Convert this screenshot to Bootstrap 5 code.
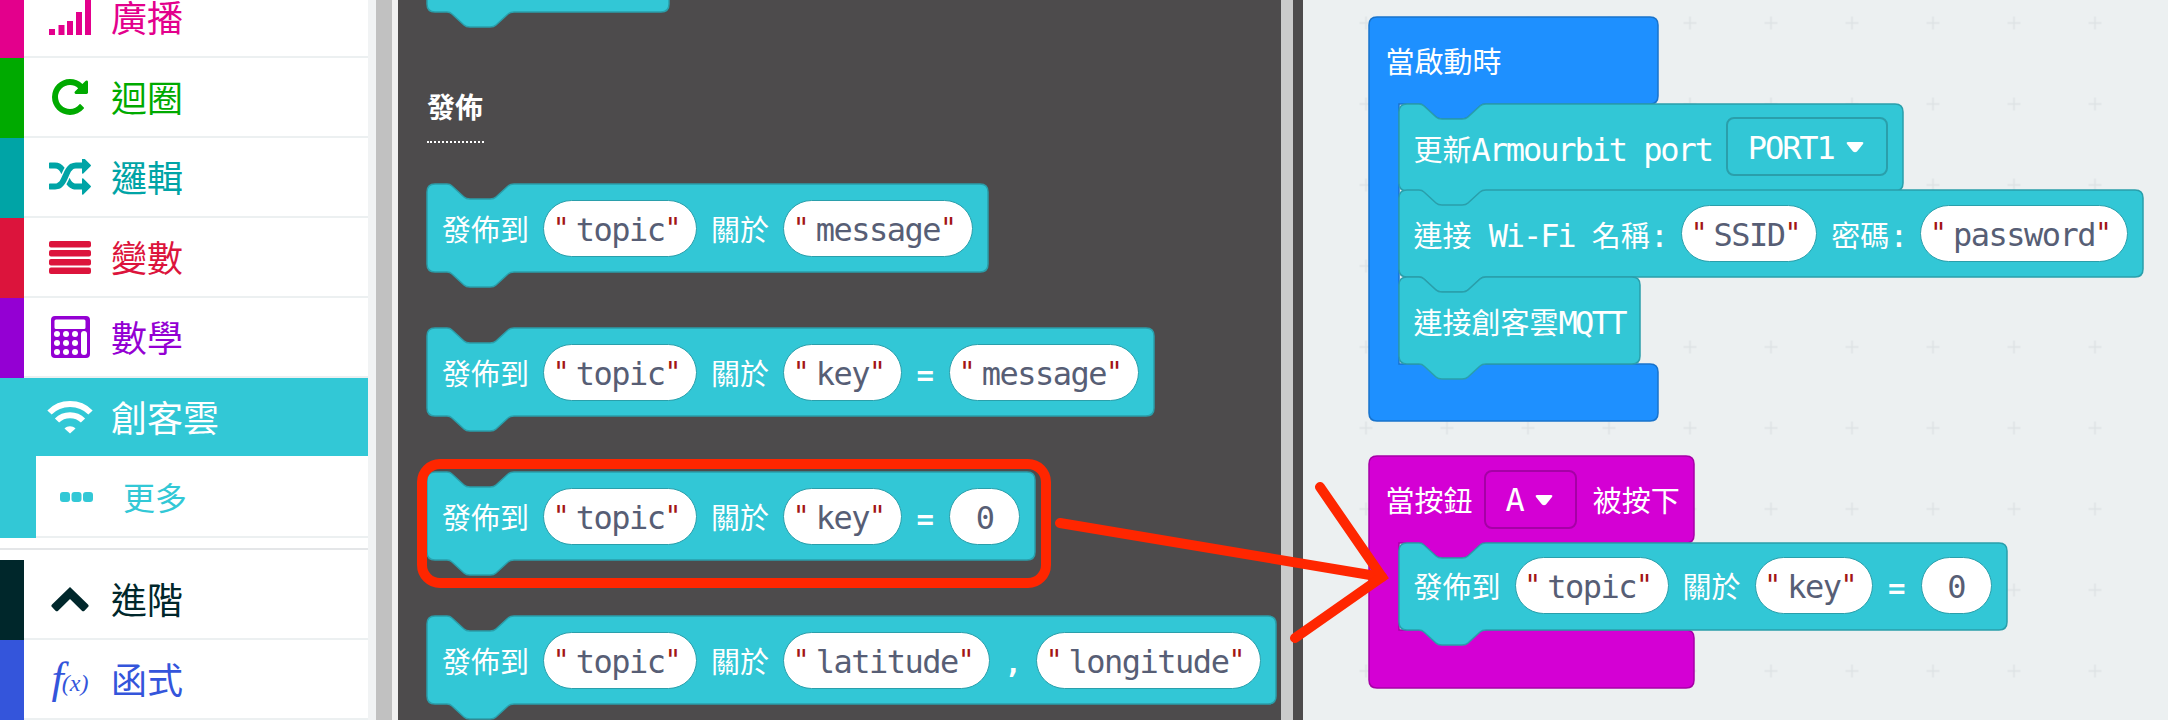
<!DOCTYPE html>
<html lang="zh-Hant">
<head>
  <meta charset="UTF-8" />
  <meta name="viewport" content="width=device-width, initial-scale=1.0"/>
  <title>MakeCode 創客雲</title>
  <link href="https://cdn.jsdelivr.net/npm/bootstrap@5.3.3/dist/css/bootstrap.min.css" rel="stylesheet">
  <style>
    html, body { height: 720px; overflow: hidden; }
    body { background: #fff; }
    .editor { width: 2168px; height: 720px; position: relative; overflow: hidden; }

    /* toolbox */
    .toolbox { width: 376px; flex: none; background: #fff; border-right: 8px solid #f1f3f4; overflow: hidden; font-family: "Noto Sans CJK TC", sans-serif; }
    .cat-list { margin-top: -22px; }
    .cat-row { height: 80px; display: flex; align-items: center; border-bottom: 2px solid #ecf0f1; font-size: 36px; line-height: 1; }
    .cat-row > span { margin-left: -1px; margin-top: -3px; }
    .cat-strip { width: 24px; height: 80px; flex: none; margin-bottom: -2px; background: currentColor; }
    .cat-icon { width: 88px; flex: none; display: flex; justify-content: center; padding-left: 4px; }
    .cat-active { background: #32c8d6; color: #fff !important; height: 78px; border-bottom: 0; }
    .cat-active .cat-strip { height: 78px; margin: 0; background: #32c8d6; }
    .cat-sub { height: 82px; border-top: 2px solid #fff; color: #32c8d6; font-size: 32px; }
    .cat-sub .cat-strip { width: 36px; height: 82px; margin-top: -2px; }
    .cat-sub .cat-icon { width: 88px; justify-content: flex-start; padding-left: 24px; }
    .cat-gap { height: 10px; border-bottom: 0; }
    .cat-rule { height: 12px; border-top: 2px solid #e4e6e8; }
    .fx-f { font: italic 44px/1 "Liberation Serif", serif; margin-right: -2px; }
    .fx-x { font: italic 24px/1 "Liberation Serif", serif; margin-top: 14px; }
    .c-pink { color: #e3008c; } .c-green { color: #00aa00; } .c-logic { color: #00a4a6; }
    .c-var { color: #dc143c; } .c-math { color: #9400d3; } .c-adv { color: #00272b; } .c-fn { color: #3455db; }

    .scroll-bar { width: 16px; flex: none; background: #c1c1c1; }
    .scroll-edge { width: 6px; flex: none; background: #f1f1f1; }

    /* flyout */
    .flyout { width: 883px; flex: none; background: #4d4b4c; padding-left: 29px; overflow: hidden; }
    .flyout-top { margin-top: -76px; }
    .fly-head { width: 57px; margin: 76px 0 41px; padding-bottom: 17px; border-bottom: 2px dotted #fff; color: #fff; font: 700 28px/36px "Noto Sans CJK TC", sans-serif; white-space: nowrap; }
    .mk-gap { margin-bottom: 56px; }
    .splitter { width: 12px; flex: none; background: #cbcbcb; }
    .gutter { width: 10px; flex: none; background: #4d4b4c; }

    /* blocks */
    .mk-block { position: relative; z-index: 0; width: max-content; min-height: 88px; display: flex; align-items: center; padding: 0 15px; gap: 14px; color: #fff; font: 29px/1 "DejaVu Sans Mono", "Noto Sans CJK TC", monospace; white-space: nowrap; }
    .mk-block > span, .mk-block > div { position: relative; }
    .mk-block > span { padding-top: 6px; }
    .mk-shape { position: absolute; left: 0; top: 0; overflow: visible; }
    .mk-teal > .mk-shape path { fill: #32c7d6; stroke: #2a9fab; stroke-width: 1.5; }
    .mk-stub { width: 242px; }
    .mk-in { min-height: 86.500px; }
    /* latin text is drawn larger and squeezed to the cell width of the original mono font */
    .mk-lat { font-size: 32px; letter-spacing: -2.100px; }
    .mk-tight { letter-spacing: -2.700px; }
    .mk-op { font-weight: 700; margin: 0 1px; }
    .mk-comma { margin: 0; }
    .mk-pill { height: 57px; padding: 3px 14.750px 0; display: flex; align-items: center; background: #fff; border: 1.500px solid #2a9fab; border-radius: 29px; color: #575e75; font-size: 32px; letter-spacing: -1.500px; }
    .mk-pill i { font-style: normal; color: #a31515; font-size: 28px; letter-spacing: 0; margin-top: -2px; }
    .mk-pill i:first-child { margin-left: -6px; margin-right: 6px; }
    .mk-num { width: 71px; justify-content: center; }
    .mk-drop { height: 59px; padding: 2px 22px 0 20px; display: flex; align-items: center; gap: 12px; border: 2px solid #2a9fab; border-radius: 8px; }
    .mk-c > .mk-chead .mk-drop { border-color: #a600a6; margin: 0 2px 0 -3px; }

    /* c blocks on the canvas */
    .workspace { flex: 1; position: relative; background: #ecf0f1; overflow: hidden; }
    .grid-dots { position: absolute; left: 0; top: 0; width: 100%; height: 100%; }
    .mk-c { position: absolute; color: #fff; font: 29px/1 "DejaVu Sans Mono", "Noto Sans CJK TC", monospace; white-space: nowrap; }
    .mk-c > .mk-shape path { stroke-width: 1.500; }
    .mk-blue > .mk-shape path { fill: #1e90ff; stroke: #1873cc; }
    .mk-pu > .mk-shape path { fill: #d400d4; stroke: #a600a6; }
    .mk-blue { left: 65.500px; top: 17px; width: 289px; }
    .mk-pu { left: 65.500px; top: 456px; width: 325px; }
    .mk-chead { position: relative; height: 86.500px; display: flex; align-items: center; gap: 14px; padding: 0 17px; }
    .mk-chead > span { padding-top: 6px; }
    .mk-cbody { margin-left: 30px; position: relative; }
    .mk-cfoot { height: 58px; }
    .mk-pu .mk-cfoot { height: 59px; }

    .mark-up { position: absolute; left: 0; top: 0; pointer-events: none; }
  </style>
</head>
<body>
  <div class="editor d-flex">

    <!-- toolbox -->
    <div class="toolbox">
      <div class="cat-list">
        <div class="cat-row c-pink"><div class="cat-strip"></div>
          <div class="cat-icon"><svg width="42" height="35" viewBox="0 0 42 35" fill="currentColor"><rect x="0" y="29" width="6" height="6"/><rect x="9.500" y="25" width="6" height="10"/><rect x="18" y="21" width="6" height="14"/><rect x="27" y="12" width="6" height="23"/><rect x="36" y="0" width="6" height="35"/></svg></div>
          <span>廣播</span></div>
        <div class="cat-row c-green"><div class="cat-strip"></div>
          <div class="cat-icon"><svg width="36" height="36" viewBox="128 128 1536 1536" fill="currentColor"><path d="M1664 256v448q0 26-19 45t-45 19h-448q-42 0-59-40-17-39 14-69l138-138q-148-137-349-137-104 0-198.5 40.5t-163.5 109.5-109.5 163.5-40.5 198.5 40.5 198.5 109.5 163.5 163.5 109.5 198.5 40.5q119 0 225-52t179-147q7-10 23-12 15 0 25 9l137 138q9 8 9.5 20.5t-7.5 22.5q-109 132-264 204.5t-327 72.5q-156 0-298-61t-245-164-164-245-61-298 61-298 164-245 245-164 298-61q147 0 284.5 55.5t244.5 156.5l130-129q29-31 70-14 39 17 39 59z"/></svg></div>
          <span>迴圈</span></div>
        <div class="cat-row c-logic"><div class="cat-strip"></div>
          <div class="cat-icon"><svg width="42" height="37" viewBox="0 128 1792 1536" fill="currentColor"><path d="M666 481q-60 92-137 273-22-45-37-72.5t-40.5-63.5-51-56.5-63-35-81.5-14.5h-224q-14 0-23-9t-9-23v-192q0-14 9-23t23-9h224q250 0 410 225zm1126 799q0 14-9 23l-320 320q-9 9-23 9-13 0-22.5-9.5t-9.5-22.5v-192q-32 0-85 .5t-81 1-73-1-71-5-64-10.5-63-18.5-58-28.5-59-40-55-53.5-56-69.5q59-93 136-273 22 45 37 72.5t40.5 63.5 51 56.5 63 35 81.5 14.5h256v-192q0-14 9-23t23-9q12 0 24 10l319 319q9 9 9 23zm0-896q0 14-9 23l-320 320q-9 9-23 9-13 0-22.5-9.5t-9.5-22.5v-192h-256q-48 0-87 15t-69 45-51 61.5-45 77.5q-32 62-78 171-29 66-49.5 111t-54 105-64 100-74 83-90 68.5-106.5 42-128 16.5h-224q-14 0-23-9t-9-23v-192q0-14 9-23t23-9h224q48 0 87-15t69-45 51-61.5 45-77.5q32-62 78-171 29-66 49.5-111t54-105 64-100 74-83 90-68.5 106.5-42 128-16.5h256v-192q0-14 9-23t23-9q12 0 24 10l319 319q9 9 9 23z"/></svg></div>
          <span>邏輯</span></div>
        <div class="cat-row c-var"><div class="cat-strip"></div>
          <div class="cat-icon"><svg width="42" height="33" viewBox="0 0 42 33" fill="currentColor"><rect width="42" height="6.500" rx="2"/><rect y="9" width="42" height="6.500" rx="2"/><rect y="18" width="42" height="6.500" rx="2"/><rect y="26.500" width="42" height="6.500" rx="2"/></svg></div>
          <span>變數</span></div>
        <div class="cat-row c-math"><div class="cat-strip"></div>
          <div class="cat-icon"><svg width="39" height="42" viewBox="0 0 39 42" fill="currentColor"><path fill-rule="evenodd" d="M4 0h31a4 4 0 0 1 4 4v34a4 4 0 0 1-4 4H4a4 4 0 0 1-4-4V4a4 4 0 0 1 4-4zM5 3.500a1.500 1.500 0 0 0-1.500 1.500v6.500a1.500 1.500 0 0 0 1.500 1.500h28a1.500 1.500 0 0 0 1.500-1.500V5a1.500 1.500 0 0 0-1.500-1.500z"/><g fill="#fff"><circle cx="6" cy="18" r="3"/><circle cx="15" cy="18" r="3"/><circle cx="24" cy="18" r="3"/><circle cx="6" cy="27" r="3"/><circle cx="15" cy="27" r="3"/><circle cx="24" cy="27" r="3"/><circle cx="6" cy="36" r="3"/><circle cx="15" cy="36" r="3"/><circle cx="24" cy="36" r="3"/><rect x="30" y="15" width="6" height="24" rx="3"/></g></svg></div>
          <span>數學</span></div>
        <div class="cat-row cat-active"><div class="cat-strip"></div>
          <div class="cat-icon"><svg width="46" height="34" viewBox="0 0 46 34" fill="none" stroke="#fff" stroke-width="6"><path d="M2.500 12.500C13.500 1.200 32.500 1.200 43.500 12.500"/><path d="M10 20.500C17 13.500 29 13.500 36 20.500"/><path d="M23 33.500L17.500 28.500C20.500 25.500 25.500 25.500 28.500 28.500z" fill="#fff" stroke="none"/></svg></div>
          <span>創客雲</span></div>
        <div class="cat-row cat-sub"><div class="cat-strip"></div>
          <div class="cat-icon"><svg width="33" height="10" viewBox="0 0 33 10" fill="currentColor"><rect width="10" height="10" rx="3"/><rect x="11.500" width="10" height="10" rx="3"/><rect x="23" width="10" height="10" rx="3"/></svg></div>
          <span>更多</span></div>
        <div class="cat-row cat-gap"></div>
        <div class="cat-rule"></div>
        <div class="cat-row c-adv"><div class="cat-strip"></div>
          <div class="cat-icon"><svg width="38" height="25" viewBox="0 0 38 25" fill="currentColor"><path d="M19 0l18 17.500q1.300 1.300 0 2.600l-3.500 3.600q-1.300 1.300-2.600 0L19 12 7.100 23.700q-1.300 1.300-2.600 0L1 20.100q-1.300-1.300 0-2.600z"/></svg></div>
          <span>進階</span></div>
        <div class="cat-row c-fn"><div class="cat-strip"></div>
          <div class="cat-icon"><span class="fx-f">f</span><span class="fx-x">(x)</span></div>
          <span>函式</span></div>
      </div>
    </div>
    <div class="scroll-bar"></div>
    <div class="scroll-edge"></div>

    <!-- flyout -->
    <div class="flyout">
      <div class="flyout-top">
        <div class="mk-block mk-teal mk-stub"></div>
        <div class="fly-head">發佈</div>
        <div class="mk-block mk-teal mk-gap">
          <span>發佈到</span><div class="mk-pill"><i>"</i>topic<i>"</i></div><span>關於</span><div class="mk-pill"><i>"</i>message<i>"</i></div>
        </div>
        <div class="mk-block mk-teal mk-gap">
          <span>發佈到</span><div class="mk-pill"><i>"</i>topic<i>"</i></div><span>關於</span><div class="mk-pill"><i>"</i>key<i>"</i></div><span class="mk-op">=</span><div class="mk-pill"><i>"</i>message<i>"</i></div>
        </div>
        <div class="mk-block mk-teal mk-gap">
          <span>發佈到</span><div class="mk-pill"><i>"</i>topic<i>"</i></div><span>關於</span><div class="mk-pill"><i>"</i>key<i>"</i></div><span class="mk-op">=</span><div class="mk-pill mk-num">0</div>
        </div>
        <div class="mk-block mk-teal">
          <span>發佈到</span><div class="mk-pill"><i>"</i>topic<i>"</i></div><span>關於</span><div class="mk-pill"><i>"</i>latitude<i>"</i></div><span class="mk-op mk-comma">,</span><div class="mk-pill"><i>"</i>longitude<i>"</i></div>
        </div>
      </div>
    </div>
    <div class="splitter"></div>
    <div class="gutter"></div>

    <!-- workspace -->
    <div class="workspace">
      <svg class="grid-dots">
        <defs>
          <pattern id="plus" x="56.500" y="16.500" width="81" height="81" patternUnits="userSpaceOnUse">
            <path d="M0 6.500h13M6.500 0v13" stroke="#dde2e4" stroke-width="1.500"/>
          </pattern>
        </defs>
        <rect width="100%" height="100%" fill="url(#plus)"/>
      </svg>

      <div class="mk-c mk-blue">
        <div class="mk-chead"><span>當啟動時</span></div>
        <div class="mk-cbody">
          <div class="mk-block mk-teal mk-in"><span>更新<span class="mk-lat">Armourbit port</span></span>
            <div class="mk-drop"><span class="mk-lat">PORT1</span><svg width="18" height="11" viewBox="0 0 18 11"><path d="M2 0h14q2 0 1 2l-6 7.500q-2 1.500-4 0L1 2Q0 0 2 0z" fill="#fff"/></svg></div>
          </div>
          <div class="mk-block mk-teal mk-in"><span>連接<span class="mk-lat"> Wi-Fi </span>名稱<span class="mk-lat">:</span></span><div class="mk-pill"><i>"</i>SSID<i>"</i></div><span>密碼<span class="mk-lat">:</span></span><div class="mk-pill"><i>"</i>password<i>"</i></div></div>
          <div class="mk-block mk-teal mk-in"><span>連接創客雲<span class="mk-lat mk-tight">MQTT</span></span></div>
        </div>
        <div class="mk-cfoot"></div>
      </div>

      <div class="mk-c mk-pu">
        <div class="mk-chead"><span>當按鈕</span>
          <div class="mk-drop"><span class="mk-lat">A</span><svg width="18" height="11" viewBox="0 0 18 11"><path d="M2 0h14q2 0 1 2l-6 7.500q-2 1.500-4 0L1 2Q0 0 2 0z" fill="#fff"/></svg></div>
          <span>被按下</span></div>
        <div class="mk-cbody">
          <div class="mk-block mk-teal mk-in"><span>發佈到</span><div class="mk-pill"><i>"</i>topic<i>"</i></div><span>關於</span><div class="mk-pill"><i>"</i>key<i>"</i></div><span class="mk-op">=</span><div class="mk-pill mk-num">0</div></div>
        </div>
        <div class="mk-cfoot"></div>
      </div>
    </div>

    <!-- red annotation drawn over the screenshot -->
    <svg class="mark-up" width="2168" height="720" fill="none" stroke="#ff2600" stroke-width="10">
      <rect x="422" y="464" width="624" height="119" rx="18"/>
      <path d="M1060 523L1382 577" stroke-linecap="round"/>
      <path d="M1320 487L1382 577L1295 638" stroke-linecap="round" stroke-linejoin="miter"/>
    </svg>
  </div>

  <script>
    // block outlines depend on the measured size, so draw them after layout
    const NS = "http://www.w3.org/2000/svg";

    function stackPath(w, h) {
      return `M8 0H20Q23 0 25 2L37 13Q39 15 43 15H63Q67 15 69 13L81 2Q83 0 87 0H${w - 8}Q${w} 0 ${w} 8V${h - 8}Q${w} ${h} ${w - 8} ${h}` +
        `H87Q83 ${h} 81 ${h + 2}L69 ${h + 13}Q67 ${h + 15} 63 ${h + 15}H43Q39 ${h + 15} 37 ${h + 13}L25 ${h + 2}Q23 ${h} 20 ${h}H8Q0 ${h} 0 ${h - 8}V8Q0 0 8 0Z`;
    }

    // the upper arm carries a tab, it fills the notch of the first inner block
    function cPath(w, h, a, b) {
      return `M8 0H${w - 8}Q${w} 0 ${w} 8V${a - 8}Q${w} ${a} ${w - 8} ${a}H117Q113 ${a} 111 ${a + 2}L99 ${a + 13}Q97 ${a + 15} 93 ${a + 15}H73Q69 ${a + 15} 67 ${a + 13}L55 ${a + 2}Q53 ${a} 50 ${a}H30` +
        `V${b}H${w - 8}Q${w} ${b} ${w} ${b + 8}V${h - 8}Q${w} ${h} ${w - 8} ${h}H8Q0 ${h} 0 ${h - 8}V8Q0 0 8 0Z`;
    }

    function addShape(el, d) {
      const svg = document.createElementNS(NS, "svg");
      svg.setAttribute("class", "mk-shape");
      svg.setAttribute("width", el.offsetWidth);
      svg.setAttribute("height", el.offsetHeight);
      const path = document.createElementNS(NS, "path");
      path.setAttribute("d", d);
      svg.appendChild(path);
      el.prepend(svg);
    }

    document.querySelectorAll(".mk-c").forEach(el => {
      const head = el.querySelector(".mk-chead").offsetHeight;
      const body = el.querySelector(".mk-cbody").offsetHeight;
      addShape(el, cPath(el.offsetWidth, el.offsetHeight, head, head + body));
    });
    document.querySelectorAll(".mk-block").forEach(el => {
      addShape(el, stackPath(el.offsetWidth, el.offsetHeight));
    });
  </script>
  <script src="https://cdn.jsdelivr.net/npm/bootstrap@5.3.3/dist/js/bootstrap.bundle.min.js"></script>
</body>
</html>
